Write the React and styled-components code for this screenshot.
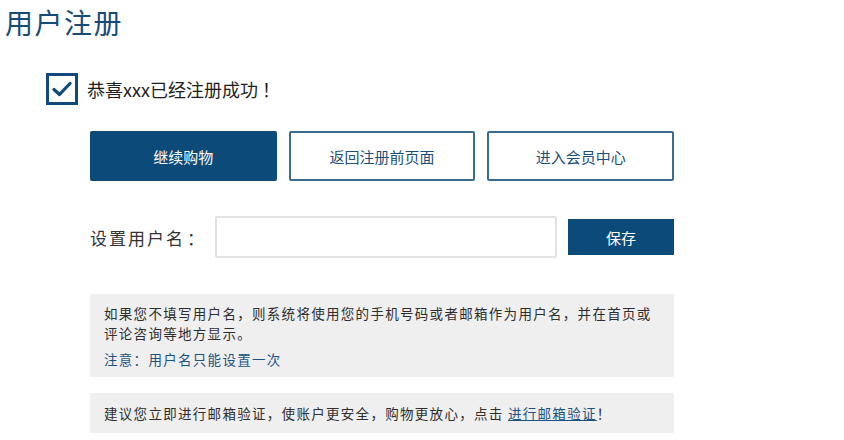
import styled, { createGlobalStyle } from "styled-components";

const GlobalStyle = createGlobalStyle`
  body {
    margin: 0;
    background: #ffffff;
    font-family: "Noto Sans CJK SC", "Noto Sans", sans-serif;
    color: #333;
  }
`;

const Page = styled.div`
  width: 844px;
  height: 440px;
  overflow: hidden;
  box-sizing: border-box;
  padding: 4px 0 0 5px;
`;

const Title = styled.h1`
  margin: 0;
  font-size: 28px;
  line-height: 36px;
  font-weight: 400;
  color: #174c78;
  letter-spacing: 1.5px;
`;

const SuccessRow = styled.div`
  display: flex;
  align-items: center;
  gap: 9px;
  margin: 33px 0 0 41px;
`;

const CheckBox = styled.div`
  width: 32px;
  height: 32px;
  box-sizing: border-box;
  border: 3px solid #11497a;
  display: flex;
  align-items: center;
  justify-content: center;
`;

const SuccessText = styled.span`
  font-size: 18px;
  color: #1e1e1e;
`;

const Bang = styled.span`
  margin-left: 4px;
`;

const Body = styled.div`
  width: 584px;
  margin-left: 85px;
`;

const ButtonRow = styled.div`
  display: grid;
  grid-template-columns: repeat(3, 1fr);
  gap: 12px;
  margin-top: 26px;
`;

const ActionButton = styled.button`
  height: 50px;
  box-sizing: border-box;
  border: 2px solid ${(p) => (p.$primary ? "#0c4a7a" : "#3a6c93")};
  background: ${(p) => (p.$primary ? "#0c4a7a" : "#fff")};
  color: ${(p) => (p.$primary ? "#fff" : "#1d4f79")};
  font-family: inherit;
  font-size: 15px;
  border-radius: 2px;
  cursor: pointer;
`;

const NameRow = styled.div`
  display: flex;
  align-items: center;
  margin-top: 35px;
`;

const Label = styled.label`
  width: 125px;
  font-size: 17px;
  color: #333;
  letter-spacing: 2px;
`;

const Colon = styled.span`
  margin-left: 2px;
`;

const NameInput = styled.input`
  width: 342px;
  height: 42px;
  box-sizing: border-box;
  border: 2px solid #e2e2e2;
  border-radius: 2px;
  outline: none;
  font-family: inherit;
  font-size: 14px;
  padding: 0 10px;
`;

const SaveButton = styled.button`
  margin-left: 11px;
  width: 106px;
  height: 36px;
  border: none;
  background: #0c4a7a;
  color: #fff;
  font-family: inherit;
  font-size: 15px;
  cursor: pointer;
`;

const InfoBox = styled.div`
  background: #efefef;
  margin-top: ${(p) => p.$top}px;
  padding: ${(p) => p.$pad};
  font-size: 13.5px;
  line-height: 20px;
  letter-spacing: 1.3px;
  color: #2e2e2e;
`;

const Note = styled.div`
  margin-top: 6px;
  color: #1d5282;
`;

const Link = styled.a`
  color: #1d5282;
  text-decoration: underline;
`;

export default function App() {
  return (
    <Page>
      <GlobalStyle />
      <Title>用户注册</Title>
      <SuccessRow>
        <CheckBox>
          <svg width="20" height="16" viewBox="0 0 20 16">
            <path
              d="M2 8.5 L7.5 13.5 L18 2.5"
              fill="none"
              stroke="#11497a"
              strokeWidth="3.2"
              strokeLinecap="round"
              strokeLinejoin="round"
            />
          </svg>
        </CheckBox>
        <SuccessText>
          恭喜xxx已经注册成功<Bang>！</Bang>
        </SuccessText>
      </SuccessRow>
      <Body>
        <ButtonRow>
          <ActionButton $primary>继续购物</ActionButton>
          <ActionButton>返回注册前页面</ActionButton>
          <ActionButton>进入会员中心</ActionButton>
        </ButtonRow>
        <NameRow>
          <Label>
            设置用户名<Colon>：</Colon>
          </Label>
          <NameInput />
          <SaveButton>保存</SaveButton>
        </NameRow>
        <InfoBox $top={36} $pad="9px 14px 8px">
          如果您不填写用户名，则系统将使用您的手机号码或者邮箱作为用户名，并在首页或评论咨询等地方显示。
          <Note>注意：用户名只能设置一次</Note>
        </InfoBox>
        <InfoBox $top={16} $pad="10px 14px">
          建议您立即进行邮箱验证，使账户更安全，购物更放心，点击 <Link href="#">进行邮箱验证</Link>！
        </InfoBox>
      </Body>
    </Page>
  );
}
